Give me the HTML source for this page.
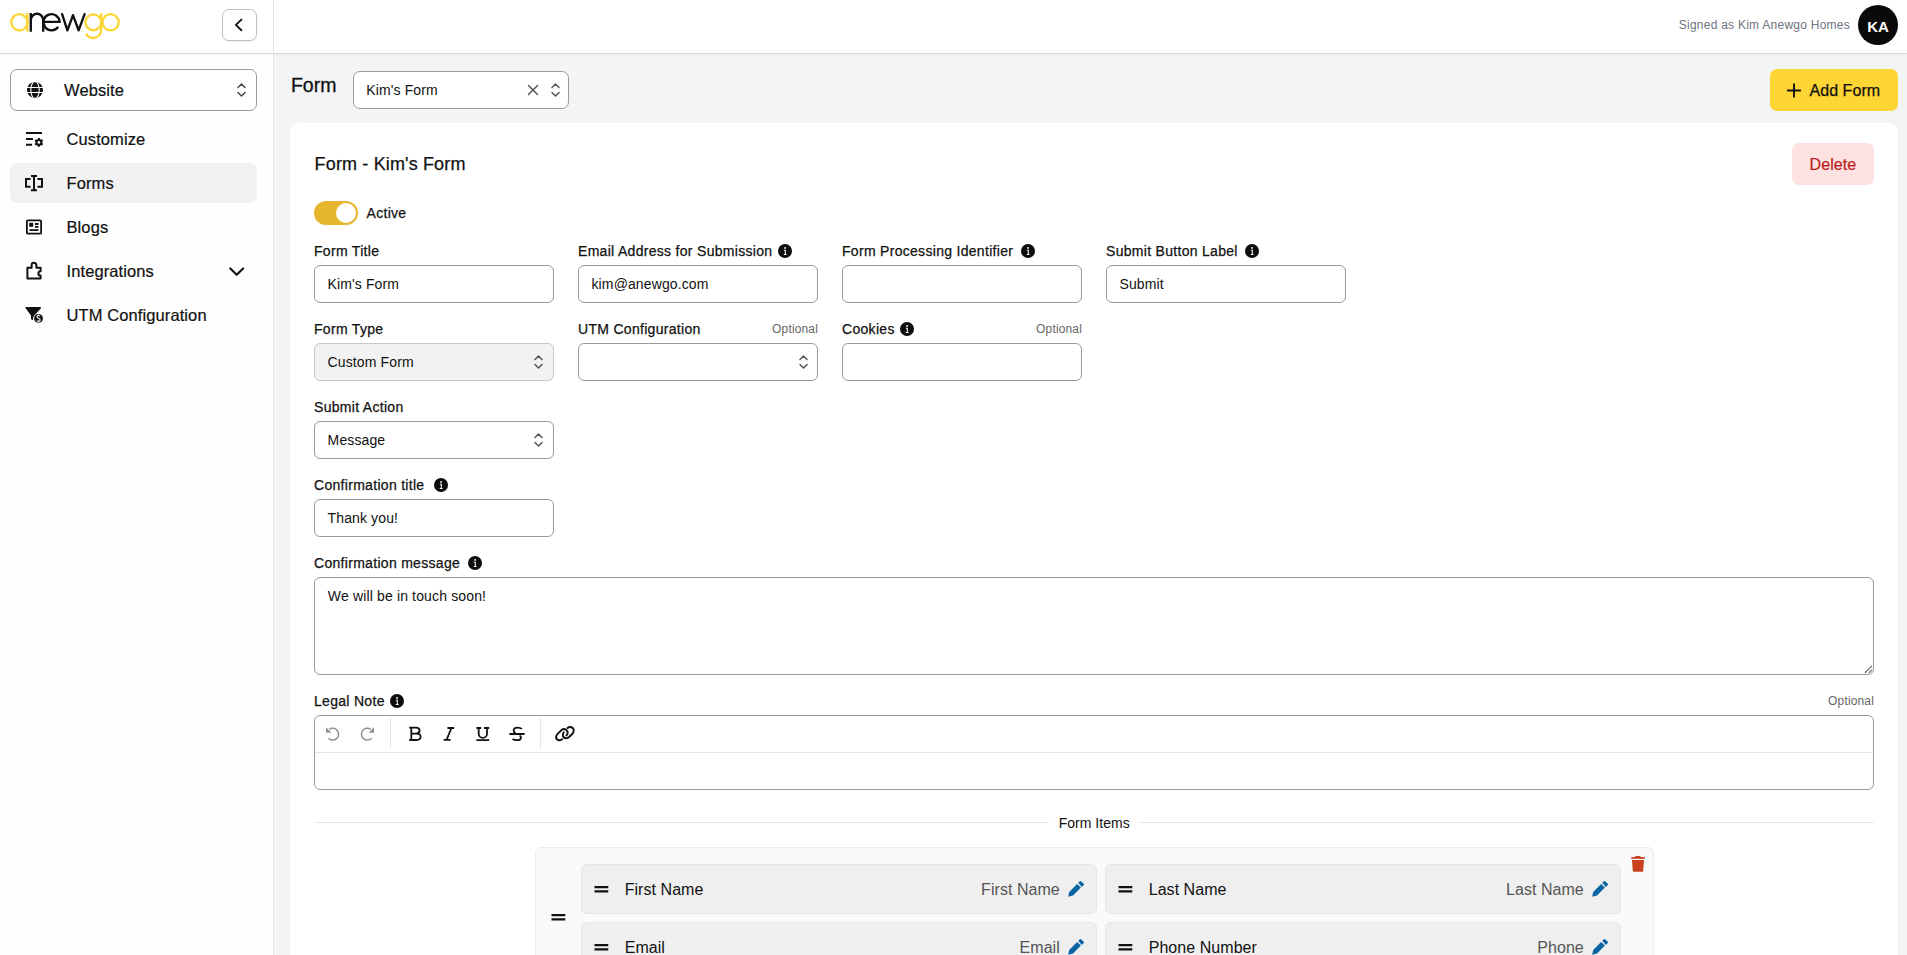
<!DOCTYPE html>
<html><head><meta charset="utf-8"><style>
html,body{margin:0;padding:0;width:1907px;height:955px;overflow:hidden;background:#fff;}
body{position:relative;font-family:"Liberation Sans",sans-serif;}
.t{position:absolute;white-space:nowrap;line-height:1;font-family:"Liberation Sans",sans-serif;}
.b{position:absolute;}
.s{position:absolute;overflow:visible;}
</style></head><body>
<div class="b" style="left:0px;top:0px;width:1907px;height:53px;background:#fff;"></div>
<div class="b" style="left:0px;top:54px;width:273px;height:901px;background:#fefefe;"></div>
<div class="b" style="left:274px;top:54px;width:1633px;height:901px;background:#f3f4f6;"></div>
<div class="b" style="left:0px;top:53px;width:1907px;height:1px;background:#d9d9db;box-shadow:0 1px 3px rgba(0,0,0,0.07);"></div>
<div class="b" style="left:273px;top:0px;width:1px;height:955px;background:#e4e4e4;"></div>
<div class="t" style="top:19.24px;font-size:12px;color:#6b7280;letter-spacing:0.25px;right:57px;">Signed as Kim Anewgo Homes</div>
<div class="b" style="left:1858px;top:5px;width:40px;height:40px;background:#0a0a0a;border-radius:50%;"></div>
<div class="t" style="top:18.50px;font-size:15px;color:#fff;font-weight:700;left:1878px;transform:translateX(-50%);">KA</div>
<svg class="s" style="left:0px;top:0px;" width="130" height="45" viewBox="0 0 130 45"><g fill="none" stroke-width="2.35">
<circle cx="19.4" cy="22.3" r="8.1" stroke="#fdd535"/><line x1="27.4" y1="13" x2="27.4" y2="31.7" stroke="#fdd535"/>
<path d="M30.8 31.7 V13 M30.8 20 A6.2 6.2 0 0 1 43.2 20 V31.7" stroke="#111"/>
<path d="M44 21.8 H59.6 A8.1 8.1 0 1 0 58.2 26.8" stroke="#111"/>
<path d="M62.1 14.2 L67.4 30.4 L73 15.2 L78.6 30.4 L84.6 14.2" stroke="#111" stroke-linejoin="round" stroke-linecap="round"/>
<circle cx="93.4" cy="22.3" r="7.9" stroke="#fdd535"/><path d="M101.1 13 V29.5 A8 8 0 0 1 86 33.6" stroke="#fdd535"/>
<circle cx="110.6" cy="22.3" r="8.1" stroke="#fdd535"/>
</g></svg>
<div class="b" style="left:222px;top:9px;width:35px;height:32px;border:1px solid #bfbfbf;border-radius:7px;box-sizing:border-box;background:#fff;box-shadow:0 1px 2px rgba(0,0,0,0.06);"></div>
<svg class="s" style="left:228px;top:14px;" width="20" height="22" viewBox="0 0 20 22"><path d="M13.4 5.6 L7.9 10.9 L13.4 16.2" fill="none" stroke="#111" stroke-width="1.9" stroke-linecap="round" stroke-linejoin="round"/></svg>
<div class="b" style="left:10px;top:69px;width:247px;height:42px;border:1px solid #9a9a9a;border-radius:7px;box-sizing:border-box;background:#fff;"></div>
<svg class="s" style="left:27px;top:82px;" width="16" height="16" viewBox="0 0 16 16"><circle cx="8" cy="8" r="8" fill="#111"/>
<g stroke="#fff" stroke-width="1.1" fill="none"><path d="M0 5.5 H16 M0 10.5 H16"/><ellipse cx="8" cy="8" rx="4.2" ry="8.5"/></g></svg>
<div class="t" style="top:81.93px;font-size:16.5px;color:#111;letter-spacing:0.1px;-webkit-text-stroke:0.2px #111;left:64px;">Website</div>
<svg class="s" style="left:237px;top:83px;" width="9" height="14" viewBox="0 0 9 14"><path d="M1 4.5 L4.5 1 L8 4.5 M1 9.5 L4.5 13 L8 9.5" fill="none" stroke="#484848" stroke-width="1.5" stroke-linecap="round" stroke-linejoin="round"/></svg>
<div class="b" style="left:10px;top:163px;width:247px;height:40px;background:#f2f2f2;border-radius:7px;"></div>
<div class="t" style="top:130.53px;font-size:16.5px;color:#111;letter-spacing:0.1px;-webkit-text-stroke:0.2px #111;left:66.5px;">Customize</div>
<div class="t" style="top:174.73px;font-size:16.5px;color:#111;letter-spacing:0.1px;-webkit-text-stroke:0.2px #111;left:66.5px;">Forms</div>
<div class="t" style="top:218.53px;font-size:16.5px;color:#111;letter-spacing:0.1px;-webkit-text-stroke:0.2px #111;left:66.5px;">Blogs</div>
<div class="t" style="top:262.73px;font-size:16.5px;color:#111;letter-spacing:0.1px;-webkit-text-stroke:0.2px #111;left:66.5px;">Integrations</div>
<div class="t" style="top:306.53px;font-size:16.5px;color:#111;letter-spacing:0.1px;-webkit-text-stroke:0.2px #111;left:66.5px;">UTM Configuration</div>
<svg class="s" style="left:24px;top:130px;" width="20" height="20" viewBox="0 0 20 20"><g fill="none" stroke="#111" stroke-width="2"><path d="M2 3 H18 M2 9 H9 M2 14.8 H8"/></g><g transform="translate(14.9,12.4)"><path d="M0 -4.4 V4.4 M-3.8 -2.2 L3.8 2.2 M-3.8 2.2 L3.8 -2.2" stroke="#111" stroke-width="2"/><circle r="3.4" fill="#111"/><circle r="1.3" fill="#fdfdfd"/></g></svg>
<svg class="s" style="left:24px;top:174px;" width="20" height="18" viewBox="0 0 20 18"><g fill="none" stroke="#111" stroke-width="2"><path d="M6.6 5 H2 V12.7 H6.6 M13.4 5 H18 V12.7 H13.4 M10 2 V16.2 M7 2 H13 M7 16.2 H13"/></g></svg>
<svg class="s" style="left:24px;top:217px;" width="20" height="20" viewBox="0 0 20 20"><g fill="none" stroke="#111" stroke-width="1.8"><rect x="2.9" y="3.3" width="14.2" height="13.4" rx="1"/><path d="M5.5 13.2 H14.5 M11 7 H14.5 M11 9.8 H14.5"/></g><rect x="5.2" y="5.8" width="4" height="4" fill="#111"/></svg>
<svg class="s" style="left:24px;top:259px;" width="20" height="22" viewBox="0 0 20 22"><path d="M3.4 19.4 V8.8 H7.6 V6.2 A2.4 2.4 0 0 1 12.4 6.2 V8.8 H16.6 V12.2 A2.2 2.2 0 0 0 16.6 16.6 V19.4 Z" fill="none" stroke="#111" stroke-width="2" stroke-linejoin="round"/></svg>
<svg class="s" style="left:22px;top:302px;" width="26" height="26" viewBox="0 0 26 26"><path d="M4.2 5 H18.3 Q19.6 5 18.9 6.2 L12.5 13.6 L11 16.3 V17.6 Q11 18.3 10.2 18 L9.6 17.6 Q9 17.2 9 16.4 V13.6 L3.6 6.2 Q2.9 5 4.2 5 Z" fill="#111"/><circle cx="16.5" cy="16.4" r="5.2" fill="#fdfdfd"/><circle cx="16.5" cy="16.4" r="4.4" fill="#111"/><path d="M18 14.2 Q17.5 13.5 16.5 13.5 Q15 13.5 15 14.8 Q15 15.9 16.5 16.3 Q18.1 16.7 18.1 17.9 Q18.1 19.2 16.5 19.2 Q15.3 19.2 14.9 18.5 M16.5 12.4 V13.5 M16.5 19.2 V20.3" fill="none" stroke="#fff" stroke-width="1.1"/></svg>
<svg class="s" style="left:227px;top:265px;" width="20" height="14" viewBox="0 0 20 14"><path d="M3.3 3.5 L9.7 9.8 L16.1 3.5" fill="none" stroke="#111" stroke-width="2.2" stroke-linecap="round" stroke-linejoin="round"/></svg>
<div class="t" style="top:76.19px;font-size:19.5px;color:#111;-webkit-text-stroke:0.3px #111;left:290.9px;">Form</div>
<div class="b" style="left:353px;top:71px;width:216px;height:38px;border:1px solid #9a9a9a;border-radius:7px;box-sizing:border-box;background:#fff;"></div>
<div class="t" style="top:83.05px;font-size:14px;color:#111;letter-spacing:0.12px;left:366.3px;">Kim's Form</div>
<svg class="s" style="left:526px;top:83px;" width="14" height="14" viewBox="0 0 14 14"><path d="M2.5 2.5 L11.5 11.5 M11.5 2.5 L2.5 11.5" stroke="#555" stroke-width="1.5" stroke-linecap="round"/></svg>
<svg class="s" style="left:550.5px;top:83px;" width="9" height="14" viewBox="0 0 9 14"><path d="M1 4.5 L4.5 1 L8 4.5 M1 9.5 L4.5 13 L8 9.5" fill="none" stroke="#555" stroke-width="1.5" stroke-linecap="round" stroke-linejoin="round"/></svg>
<div class="b" style="left:1770px;top:69px;width:128px;height:42px;background:#fdd535;border-radius:7px;"></div>
<svg class="s" style="left:1786px;top:81px;" width="16" height="18" viewBox="0 0 16 18"><path d="M8 3.3 V15.7 M1.8 9.5 H14.2" stroke="#111" stroke-width="1.9" stroke-linecap="round"/></svg>
<div class="t" style="top:83.26px;font-size:16px;color:#111;letter-spacing:0.05px;-webkit-text-stroke:0.25px #111;left:1809.5px;">Add Form</div>
<div class="b" style="left:290px;top:123px;width:1608px;height:852px;background:#fff;border-radius:8px;box-shadow:0 1px 2px rgba(0,0,0,0.04);"></div>
<div class="t" style="top:154.76px;font-size:18px;color:#111;letter-spacing:0.15px;-webkit-text-stroke:0.25px #111;left:314.6px;">Form - Kim's Form</div>
<div class="b" style="left:1792px;top:143px;width:82px;height:42px;background:#fee2e2;border-radius:7px;"></div>
<div class="t" style="top:157.36px;font-size:16px;color:#b91c1c;letter-spacing:0.1px;-webkit-text-stroke:0.2px #b91c1c;left:1809.5px;">Delete</div>
<div class="b" style="left:314px;top:201px;width:44px;height:24px;background:#e6b52e;border-radius:12px;"></div>
<div class="b" style="left:336px;top:203px;width:20px;height:20px;background:#fff;border-radius:50%;"></div>
<div class="t" style="top:206.05px;font-size:14px;color:#111;letter-spacing:0.3px;-webkit-text-stroke:0.25px #111;left:366.5px;">Active</div>
<div class="t" style="top:244.15px;font-size:14px;color:#111;letter-spacing:0.3px;-webkit-text-stroke:0.25px #111;left:314px;">Form Title</div>
<div class="b" style="left:314px;top:265px;width:240px;height:38px;border:1px solid #9a9a9a;border-radius:6px;box-sizing:border-box;background:#fff;"></div>
<div class="t" style="top:277.15px;font-size:14px;color:#111;letter-spacing:0.12px;left:327.5px;">Kim's Form</div>
<div class="t" style="top:244.15px;font-size:14px;color:#111;letter-spacing:0.3px;-webkit-text-stroke:0.25px #111;left:578px;">Email Address for Submission</div>
<svg class="s" style="left:778px;top:244px;" width="14" height="14" viewBox="0 0 14 14"><circle cx="7" cy="7" r="7" fill="#0d0d0d"/><circle cx="7.1" cy="3.9" r="0.95" fill="#fff"/><path d="M5.9 6.3 H7.3 V10.2 M5.8 10.4 H8.5" stroke="#fff" stroke-width="1.05" fill="none"/></svg>
<div class="b" style="left:578px;top:265px;width:240px;height:38px;border:1px solid #9a9a9a;border-radius:6px;box-sizing:border-box;background:#fff;"></div>
<div class="t" style="top:277.15px;font-size:14px;color:#111;letter-spacing:0.12px;left:591.5px;">kim@anewgo.com</div>
<div class="t" style="top:244.15px;font-size:14px;color:#111;letter-spacing:0.3px;-webkit-text-stroke:0.25px #111;left:842px;">Form Processing Identifier</div>
<svg class="s" style="left:1021px;top:244px;" width="14" height="14" viewBox="0 0 14 14"><circle cx="7" cy="7" r="7" fill="#0d0d0d"/><circle cx="7.1" cy="3.9" r="0.95" fill="#fff"/><path d="M5.9 6.3 H7.3 V10.2 M5.8 10.4 H8.5" stroke="#fff" stroke-width="1.05" fill="none"/></svg>
<div class="b" style="left:842px;top:265px;width:240px;height:38px;border:1px solid #9a9a9a;border-radius:6px;box-sizing:border-box;background:#fff;"></div>
<div class="t" style="top:244.15px;font-size:14px;color:#111;letter-spacing:0.3px;-webkit-text-stroke:0.25px #111;left:1106px;">Submit Button Label</div>
<svg class="s" style="left:1245px;top:244px;" width="14" height="14" viewBox="0 0 14 14"><circle cx="7" cy="7" r="7" fill="#0d0d0d"/><circle cx="7.1" cy="3.9" r="0.95" fill="#fff"/><path d="M5.9 6.3 H7.3 V10.2 M5.8 10.4 H8.5" stroke="#fff" stroke-width="1.05" fill="none"/></svg>
<div class="b" style="left:1106px;top:265px;width:240px;height:38px;border:1px solid #9a9a9a;border-radius:6px;box-sizing:border-box;background:#fff;"></div>
<div class="t" style="top:277.15px;font-size:14px;color:#111;letter-spacing:0.12px;left:1119.5px;">Submit</div>
<div class="t" style="top:322.35px;font-size:14px;color:#111;letter-spacing:0.3px;-webkit-text-stroke:0.25px #111;left:314px;">Form Type</div>
<div class="b" style="left:314px;top:343px;width:240px;height:38px;border:1px solid #c8c8c8;border-radius:6px;box-sizing:border-box;background:#f2f2f2;"></div>
<div class="t" style="top:354.95px;font-size:14px;color:#111;letter-spacing:0.12px;left:327.6px;">Custom Form</div>
<svg class="s" style="left:534px;top:355px;" width="9" height="14" viewBox="0 0 9 14"><path d="M1 4.5 L4.5 1 L8 4.5 M1 9.5 L4.5 13 L8 9.5" fill="none" stroke="#555" stroke-width="1.5" stroke-linecap="round" stroke-linejoin="round"/></svg>
<div class="t" style="top:322.35px;font-size:14px;color:#111;letter-spacing:0.3px;-webkit-text-stroke:0.25px #111;left:578px;">UTM Configuration</div>
<div class="t" style="top:323.04px;font-size:12px;color:#666;letter-spacing:0.15px;right:1089px;">Optional</div>
<div class="b" style="left:578px;top:343px;width:240px;height:38px;border:1px solid #9a9a9a;border-radius:6px;box-sizing:border-box;background:#fff;"></div>
<svg class="s" style="left:798.5px;top:355px;" width="9" height="14" viewBox="0 0 9 14"><path d="M1 4.5 L4.5 1 L8 4.5 M1 9.5 L4.5 13 L8 9.5" fill="none" stroke="#555" stroke-width="1.5" stroke-linecap="round" stroke-linejoin="round"/></svg>
<div class="t" style="top:322.35px;font-size:14px;color:#111;letter-spacing:0.3px;-webkit-text-stroke:0.25px #111;left:842px;">Cookies</div>
<svg class="s" style="left:900px;top:322px;" width="14" height="14" viewBox="0 0 14 14"><circle cx="7" cy="7" r="7" fill="#0d0d0d"/><circle cx="7.1" cy="3.9" r="0.95" fill="#fff"/><path d="M5.9 6.3 H7.3 V10.2 M5.8 10.4 H8.5" stroke="#fff" stroke-width="1.05" fill="none"/></svg>
<div class="t" style="top:323.04px;font-size:12px;color:#666;letter-spacing:0.15px;right:825px;">Optional</div>
<div class="b" style="left:842px;top:343px;width:240px;height:38px;border:1px solid #9a9a9a;border-radius:6px;box-sizing:border-box;background:#fff;"></div>
<div class="t" style="top:400.15px;font-size:14px;color:#111;letter-spacing:0.3px;-webkit-text-stroke:0.25px #111;left:314px;">Submit Action</div>
<div class="b" style="left:314px;top:421px;width:240px;height:38px;border:1px solid #9a9a9a;border-radius:6px;box-sizing:border-box;background:#fff;"></div>
<div class="t" style="top:432.75px;font-size:14px;color:#111;letter-spacing:0.12px;left:327.6px;">Message</div>
<svg class="s" style="left:534px;top:433px;" width="9" height="14" viewBox="0 0 9 14"><path d="M1 4.5 L4.5 1 L8 4.5 M1 9.5 L4.5 13 L8 9.5" fill="none" stroke="#555" stroke-width="1.5" stroke-linecap="round" stroke-linejoin="round"/></svg>
<div class="t" style="top:478.45px;font-size:14px;color:#111;letter-spacing:0.3px;-webkit-text-stroke:0.25px #111;left:314px;">Confirmation title</div>
<svg class="s" style="left:434px;top:478px;" width="14" height="14" viewBox="0 0 14 14"><circle cx="7" cy="7" r="7" fill="#0d0d0d"/><circle cx="7.1" cy="3.9" r="0.95" fill="#fff"/><path d="M5.9 6.3 H7.3 V10.2 M5.8 10.4 H8.5" stroke="#fff" stroke-width="1.05" fill="none"/></svg>
<div class="b" style="left:314px;top:499px;width:240px;height:38px;border:1px solid #9a9a9a;border-radius:6px;box-sizing:border-box;background:#fff;"></div>
<div class="t" style="top:510.65px;font-size:14px;color:#111;letter-spacing:0.12px;left:327.6px;">Thank you!</div>
<div class="t" style="top:556.25px;font-size:14px;color:#111;letter-spacing:0.3px;-webkit-text-stroke:0.25px #111;left:314px;">Confirmation message</div>
<svg class="s" style="left:468px;top:556px;" width="14" height="14" viewBox="0 0 14 14"><circle cx="7" cy="7" r="7" fill="#0d0d0d"/><circle cx="7.1" cy="3.9" r="0.95" fill="#fff"/><path d="M5.9 6.3 H7.3 V10.2 M5.8 10.4 H8.5" stroke="#fff" stroke-width="1.05" fill="none"/></svg>
<div class="b" style="left:314px;top:577px;width:1560px;height:98px;border:1px solid #9a9a9a;border-radius:6px;box-sizing:border-box;background:#fff;"></div>
<div class="t" style="top:588.95px;font-size:14px;color:#111;letter-spacing:0.15px;left:327.8px;">We will be in touch soon!</div>
<svg class="s" style="left:1860px;top:661px;" width="14" height="14" viewBox="0 0 14 14"><path d="M5.3 11.5 L11.7 5.2 M9.3 11.5 L11.7 9.1" stroke="#666" stroke-width="1.1" stroke-linecap="round"/></svg>
<div class="t" style="top:694.25px;font-size:14px;color:#111;letter-spacing:0.3px;-webkit-text-stroke:0.25px #111;left:314px;">Legal Note</div>
<svg class="s" style="left:390px;top:694px;" width="14" height="14" viewBox="0 0 14 14"><circle cx="7" cy="7" r="7" fill="#0d0d0d"/><circle cx="7.1" cy="3.9" r="0.95" fill="#fff"/><path d="M5.9 6.3 H7.3 V10.2 M5.8 10.4 H8.5" stroke="#fff" stroke-width="1.05" fill="none"/></svg>
<div class="t" style="top:695.34px;font-size:12px;color:#666;letter-spacing:0.15px;right:33px;">Optional</div>
<div class="b" style="left:314px;top:715px;width:1560px;height:75px;border:1px solid #9a9a9a;border-radius:6px;box-sizing:border-box;background:#fff;"></div>
<div class="b" style="left:315px;top:752px;width:1558px;height:1px;background:#e5e5e5;"></div>
<div class="b" style="left:390px;top:718px;width:1px;height:31px;background:#e5e5e5;"></div>
<div class="b" style="left:540px;top:718px;width:1px;height:31px;background:#e5e5e5;"></div>
<svg class="s" style="left:318px;top:720px;" width="30" height="28" viewBox="0 0 30 28"><path d="M329.2 729.4 A5.9 5.9 0 1 1 328.4 738.2" fill="none" stroke="#909090" stroke-width="1.5" transform="translate(-318,-720)"/><path d="M326 727.2 V732.8 H331.4 Z" fill="#909090" transform="translate(-318,-720)"/></svg>
<svg class="s" style="left:352px;top:720px;transform:scaleX(-1);" width="30" height="28" viewBox="0 0 30 28"><path d="M329.2 729.4 A5.9 5.9 0 1 1 328.4 738.2" fill="none" stroke="#909090" stroke-width="1.5" transform="translate(-318,-720)"/><path d="M326 727.2 V732.8 H331.4 Z" fill="#909090" transform="translate(-318,-720)"/></svg>
<svg class="s" style="left:0px;top:0px;" width="1" height="1" viewBox="0 0 1 1"><path d="M409.2 727.7 H416 Q419.6 727.7 419.6 730.6 Q419.6 733.6 416 733.6 H411.3 M411.3 727.7 V740 M409.2 740 H416.4 Q420.6 740 420.6 736.8 Q420.6 733.6 416.4 733.6" fill="none" stroke="#111" stroke-width="1.8" stroke-linecap="butt" stroke-linejoin="round"/></svg>
<svg class="s" style="left:0px;top:0px;" width="1" height="1" viewBox="0 0 1 1"><path d="M447.4 728 H454.2 M451.4 728 L446.6 739.9 M443.6 739.9 H450.6" fill="none" stroke="#111" stroke-width="1.8" stroke-linecap="butt" stroke-linejoin="round"/></svg>
<svg class="s" style="left:0px;top:0px;" width="1" height="1" viewBox="0 0 1 1"><path d="M476.4 728 H481.2 M484 728 H489.2 M478.7 728 V733.8 A4.15 4.15 0 0 0 487 733.8 V728 M476.4 740.1 H489.2" fill="none" stroke="#111" stroke-width="1.8" stroke-linecap="butt" stroke-linejoin="round"/></svg>
<svg class="s" style="left:0px;top:0px;" width="1" height="1" viewBox="0 0 1 1"><path d="M509.4 734 H524.6 M521.8 729 Q520.6 727.6 517.6 727.6 Q513.6 727.6 513.6 730.6 Q513.6 732.4 515.6 733.4 M519.6 735.4 Q521.4 736.6 521 738 Q520.4 740.2 517 740.2 Q514 740.2 512.6 738.8" fill="none" stroke="#111" stroke-width="1.8" stroke-linecap="butt" stroke-linejoin="round"/></svg>
<svg class="s" style="left:0px;top:0px;" width="1" height="1" viewBox="0 0 1 1"><g fill="none" stroke="#111" stroke-width="1.9" stroke-linecap="round"><path d="M562.4 739.2 Q561 740.6 558.6 740.2 Q555.8 739.4 556.1 736.5 Q556.4 735 557.8 733.6 L561.6 730 Q563.6 728.4 566 729.6 Q568 731 567.6 733.4 Q567.3 734.6 566.4 735.4"/><path d="M563.8 732.2 Q562.3 734.2 563 736.4 Q564.5 738.6 567 738.1 Q568.2 737.8 569.1 737 L572.6 733.5 Q574.2 731.5 573.6 729.4 Q572.6 727 570.2 727 Q568.6 727 567.6 728"/></g></svg>
<div class="b" style="left:314px;top:822px;width:735px;height:1px;background:#e5e7eb;"></div>
<div class="b" style="left:1138px;top:822px;width:736px;height:1px;background:#e5e7eb;"></div>
<div class="t" style="top:816.15px;font-size:14px;color:#111;letter-spacing:0.02px;left:1058.7px;">Form Items</div>
<div class="b" style="left:535px;top:847px;width:1119px;height:128px;background:#fafafa;border:1px solid #ececec;border-radius:6px;box-sizing:border-box;"></div>
<svg class="s" style="left:550.5px;top:913.5px;" width="15" height="8" viewBox="0 0 15 8"><path d="M0.5 1.2 H14.3 M0.5 5.3 H14.3" stroke="#111" stroke-width="2.2"/></svg>
<svg class="s" style="left:638px;top:854px;" width="10" height="10" viewBox="0 0 10 10"></svg>
<svg class="s" style="left:1631px;top:856px;" width="14" height="17" viewBox="0 0 14 17"><path d="M0.3 1.95 H13.8" stroke="#c8401c" stroke-width="1.8"/><path d="M3.9 1.2 L4.6 0 H9.2 L9.9 1.2 Z" fill="#c8401c"/><path d="M1 4 H13 L12.2 15.1 Q12.1 15.8 11.4 15.8 H2.6 Q1.9 15.8 1.8 15.1 Z" fill="#c8401c"/></svg>
<div class="b" style="left:581px;top:864px;width:516px;height:50px;background:#efefef;border:1px solid #e6e6e6;border-radius:6px;box-sizing:border-box;"></div>
<svg class="s" style="left:594px;top:885.5px;" width="15" height="8" viewBox="0 0 15 8"><path d="M0.5 1.2 H14.3 M0.5 5.3 H14.3" stroke="#111" stroke-width="2.2"/></svg>
<div class="t" style="top:882.46px;font-size:16px;color:#111;letter-spacing:0.05px;left:624.7px;">First Name</div>
<div class="t" style="top:882.46px;font-size:16px;color:#555;letter-spacing:0.05px;right:847.2px;">First Name</div>
<svg class="s" style="left:1068px;top:881px;" width="16" height="16" viewBox="0 0 16 16"><path d="M0.2 15.8 L1.2 10.9 L9.1 3.1 L12.9 6.6 L5.1 14.6 Z" fill="#0a66a3"/><path d="M10.2 1.8 L12 0.3 Q12.6 -0.2 13.3 0.4 L15.8 2.7 Q16.4 3.4 15.7 4.1 L13.8 5.9 Z" fill="#0a66a3"/></svg>
<div class="b" style="left:1105px;top:864px;width:516px;height:50px;background:#efefef;border:1px solid #e6e6e6;border-radius:6px;box-sizing:border-box;"></div>
<svg class="s" style="left:1118px;top:885.5px;" width="15" height="8" viewBox="0 0 15 8"><path d="M0.5 1.2 H14.3 M0.5 5.3 H14.3" stroke="#111" stroke-width="2.2"/></svg>
<div class="t" style="top:882.46px;font-size:16px;color:#111;letter-spacing:0.05px;left:1148.7px;">Last Name</div>
<div class="t" style="top:882.46px;font-size:16px;color:#555;letter-spacing:0.05px;right:323.20000000000005px;">Last Name</div>
<svg class="s" style="left:1592px;top:881px;" width="16" height="16" viewBox="0 0 16 16"><path d="M0.2 15.8 L1.2 10.9 L9.1 3.1 L12.9 6.6 L5.1 14.6 Z" fill="#0a66a3"/><path d="M10.2 1.8 L12 0.3 Q12.6 -0.2 13.3 0.4 L15.8 2.7 Q16.4 3.4 15.7 4.1 L13.8 5.9 Z" fill="#0a66a3"/></svg>
<div class="b" style="left:581px;top:922px;width:516px;height:50px;background:#efefef;border:1px solid #e6e6e6;border-radius:6px;box-sizing:border-box;"></div>
<svg class="s" style="left:594px;top:943.5px;" width="15" height="8" viewBox="0 0 15 8"><path d="M0.5 1.2 H14.3 M0.5 5.3 H14.3" stroke="#111" stroke-width="2.2"/></svg>
<div class="t" style="top:940.46px;font-size:16px;color:#111;letter-spacing:0.05px;left:624.7px;">Email</div>
<div class="t" style="top:940.46px;font-size:16px;color:#555;letter-spacing:0.05px;right:847.2px;">Email</div>
<svg class="s" style="left:1068px;top:939px;" width="16" height="16" viewBox="0 0 16 16"><path d="M0.2 15.8 L1.2 10.9 L9.1 3.1 L12.9 6.6 L5.1 14.6 Z" fill="#0a66a3"/><path d="M10.2 1.8 L12 0.3 Q12.6 -0.2 13.3 0.4 L15.8 2.7 Q16.4 3.4 15.7 4.1 L13.8 5.9 Z" fill="#0a66a3"/></svg>
<div class="b" style="left:1105px;top:922px;width:516px;height:50px;background:#efefef;border:1px solid #e6e6e6;border-radius:6px;box-sizing:border-box;"></div>
<svg class="s" style="left:1118px;top:943.5px;" width="15" height="8" viewBox="0 0 15 8"><path d="M0.5 1.2 H14.3 M0.5 5.3 H14.3" stroke="#111" stroke-width="2.2"/></svg>
<div class="t" style="top:940.46px;font-size:16px;color:#111;letter-spacing:0.05px;left:1148.7px;">Phone Number</div>
<div class="t" style="top:940.46px;font-size:16px;color:#555;letter-spacing:0.05px;right:323.20000000000005px;">Phone</div>
<svg class="s" style="left:1592px;top:939px;" width="16" height="16" viewBox="0 0 16 16"><path d="M0.2 15.8 L1.2 10.9 L9.1 3.1 L12.9 6.6 L5.1 14.6 Z" fill="#0a66a3"/><path d="M10.2 1.8 L12 0.3 Q12.6 -0.2 13.3 0.4 L15.8 2.7 Q16.4 3.4 15.7 4.1 L13.8 5.9 Z" fill="#0a66a3"/></svg>
</body></html>
